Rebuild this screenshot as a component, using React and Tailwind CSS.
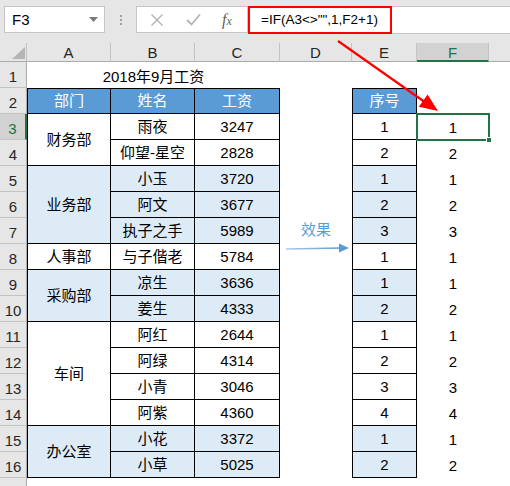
import React from 'react';

const rows = [
  ['雨夜', 3247, 1, false],
  ['仰望-星空', 2828, 2, false],
  ['小玉', 3720, 1, true],
  ['阿文', 3677, 2, true],
  ['执子之手', 5989, 3, true],
  ['与子偕老', 5784, 1, false],
  ['凉生', 3636, 1, true],
  ['姜生', 4333, 2, true],
  ['阿红', 2644, 1, false],
  ['阿绿', 4314, 2, false],
  ['小青', 3046, 3, false],
  ['阿紫', 4360, 4, false],
  ['小花', 3372, 1, true],
  ['小草', 5025, 2, true],
];

const depts = {
  3: ['财务部', 2, false],
  5: ['业务部', 3, true],
  8: ['人事部', 1, false],
  9: ['采购部', 2, true],
  11: ['车间', 4, false],
  15: ['办公室', 2, true],
};

const spanCls = { 1: '', 2: 'row-span-2', 3: 'row-span-3', 4: 'row-span-4' };

const cell = 'flex items-center justify-center border-r border-b border-black pt-[2px]';

function RowHead({ n, sel }) {
  return (
    <div
      className={
        'flex items-end justify-center border-b border-[#c3c3c3] leading-[18px] pb-[1px] ' +
        (sel
          ? 'bg-[#d2d2d2] text-[#217346] border-r-2 border-r-[#217346]'
          : 'bg-[#e6e6e6] text-[#262626] border-r border-r-[#ababab]')
      }
    >
      {n}
    </div>
  );
}

function ColHead({ label, sel }) {
  return (
    <div
      className={
        'flex items-center justify-center pt-[3px] border-r border-[#c3c3c3] ' +
        (sel
          ? 'bg-[#d2d2d2] text-[#217346] border-b-2 border-b-[#217346]'
          : 'bg-[#e6e6e6] text-[#262626] border-b border-b-[#ababab]')
      }
    >
      {label}
    </div>
  );
}

export default function App() {
  return (
    <div
      className="relative w-[510px] h-[486px] overflow-hidden bg-white text-[15px] text-black flex flex-col"
      style={{ fontFamily: '"Liberation Sans", "Noto Sans CJK SC", sans-serif' }}
    >
      {/* Toolbar */}
      <div className="h-[43px] shrink-0 bg-[#e6e6e6] flex items-start pt-[6px]">
        <div className="ml-[4px] w-[101px] h-[27px] bg-white border border-[#c6c6c6] flex items-center justify-between pl-[7px] pr-[6px]">
          <span className="leading-none">F3</span>
          <svg width="9" height="6" viewBox="0 0 9 6">
            <polygon points="0,0 9,0 4.5,5" fill="#7a7a7a" />
          </svg>
        </div>
        <div className="w-[31px] h-[27px] flex flex-col items-center justify-center gap-[2px]">
          <span className="w-[2px] h-[2px] bg-[#a0a0a0]" />
          <span className="w-[2px] h-[2px] bg-[#a0a0a0]" />
          <span className="w-[2px] h-[2px] bg-[#a0a0a0]" />
        </div>
        <div className="w-[112px] h-[27px] bg-white border border-[#c6c6c6] flex items-center">
          <svg className="ml-[13px]" width="14" height="14" viewBox="0 0 14 14">
            <path d="M1.5 1.5 L12.5 12.5 M12.5 1.5 L1.5 12.5" stroke="#b3b3b3" strokeWidth="1.4" fill="none" />
          </svg>
          <svg className="ml-[22px]" width="15" height="13" viewBox="0 0 15 13">
            <path d="M1 7 L5.5 11.5 L14 1.5" stroke="#b3b3b3" strokeWidth="1.8" fill="none" />
          </svg>
          <span
            className="ml-[21px] italic text-[#5f5f5f] leading-none text-[16px]"
            style={{ fontFamily: '"Liberation Serif", serif' }}
          >
            f<span className="text-[12px]">x</span>
          </span>
        </div>
        <div className="flex-1 h-[28px] bg-white border-y border-[#c6c6c6] flex items-stretch">
          <div className="w-[144px] -my-[1px] border-2 border-[#ff0000] flex items-center pl-[11px] leading-none text-[13.5px]">
            =IF(A3&lt;&gt;"",1,F2+1)
          </div>
        </div>
      </div>

      {/* Sheet */}
      <div className="grid grid-cols-[27px_84px_84px_85px_72px_65px_72px_1fr] grid-rows-[19px_repeat(17,26px)]">
        {/* column headers */}
        <div className="relative bg-[#e6e6e6] border-r border-[#c3c3c3] border-b border-b-[#ababab]">
          <svg className="absolute left-[12px] top-[4px]" width="13" height="12" viewBox="0 0 13 12">
            <polygon points="13,0 13,12 0,12" fill="#b5b5b5" />
          </svg>
        </div>
        <ColHead label="A" />
        <ColHead label="B" />
        <ColHead label="C" />
        <ColHead label="D" />
        <ColHead label="E" />
        <ColHead label="F" sel />
        <div className="bg-[#e6e6e6] border-b border-[#ababab]" />

        {/* row 1 */}
        <RowHead n={1} />
        <div className="col-span-3 flex items-center justify-center pt-[4px]">2018年9月工资</div>
        <div />
        <div />
        <div />
        <div />

        {/* row 2 */}
        <RowHead n={2} />
        <div className={cell + ' border-l border-t bg-[#5b9bd5] text-white pb-[2px]'}>部门</div>
        <div className={cell + ' border-t bg-[#5b9bd5] text-white pb-[2px]'}>姓名</div>
        <div className={cell + ' border-t bg-[#5b9bd5] text-white pb-[2px]'}>工资</div>
        <div />
        <div className={cell + ' border-l border-t bg-[#5b9bd5] text-white pb-[2px]'}>序号</div>
        <div />
        <div />

        {rows.map(([name, pay, seq, fill], i) => {
          const r = i + 3;
          const d = depts[r];
          const bg = fill ? ' bg-[#ddebf7]' : ' bg-white';
          return (
            <React.Fragment key={r}>
              <RowHead n={r} sel={r === 3} />
              {d && (
                <div className={cell + ' border-l ' + spanCls[d[1]] + (d[2] ? ' bg-[#ddebf7]' : ' bg-white')}>
                  {d[0]}
                </div>
              )}
              <div className={cell + bg}>{name}</div>
              <div className={cell + bg}>{pay}</div>
              <div />
              <div className={cell + ' border-l' + bg}>{seq}</div>
              <div className="relative flex items-center justify-center pt-[2px]">
                {seq}
                {r === 3 && (
                  <>
                    <div className="absolute -left-[1px] -top-[1px] -right-[1px] -bottom-[1px] border-2 border-[#217346]" />
                    <div className="absolute -right-[3px] -bottom-[3px] w-[6px] h-[6px] bg-[#217346] border border-white" />
                  </>
                )}
              </div>
              <div />
            </React.Fragment>
          );
        })}

        {/* row 17 (cut off) */}
        <RowHead n="" />
      </div>

      {/* floating annotation: 效果 label */}
      <div className="absolute left-[301px] top-[221px] text-[#5b9bd5] leading-[18px]">效果</div>

      {/* drawn arrows */}
      <svg className="absolute left-0 top-0 pointer-events-none" width="510" height="486" viewBox="0 0 510 486">
        <defs>
          <linearGradient id="blueg" x1="0" y1="0" x2="1" y2="0">
            <stop offset="0" stopColor="#a9c9ea" />
            <stop offset="1" stopColor="#5b9bd5" />
          </linearGradient>
        </defs>
        <line x1="338" y1="41" x2="424" y2="101.5" stroke="#ff0000" strokeWidth="2.2" />
        <polygon points="438,111 418.8,106.8 427.6,94.6" fill="#ff0000" />
        <line x1="286" y1="249" x2="341" y2="248" stroke="url(#blueg)" strokeWidth="1.6" />
        <polygon points="349,248 339,243.5 339,252.5" fill="#5b9bd5" />
      </svg>
    </div>
  );
}
